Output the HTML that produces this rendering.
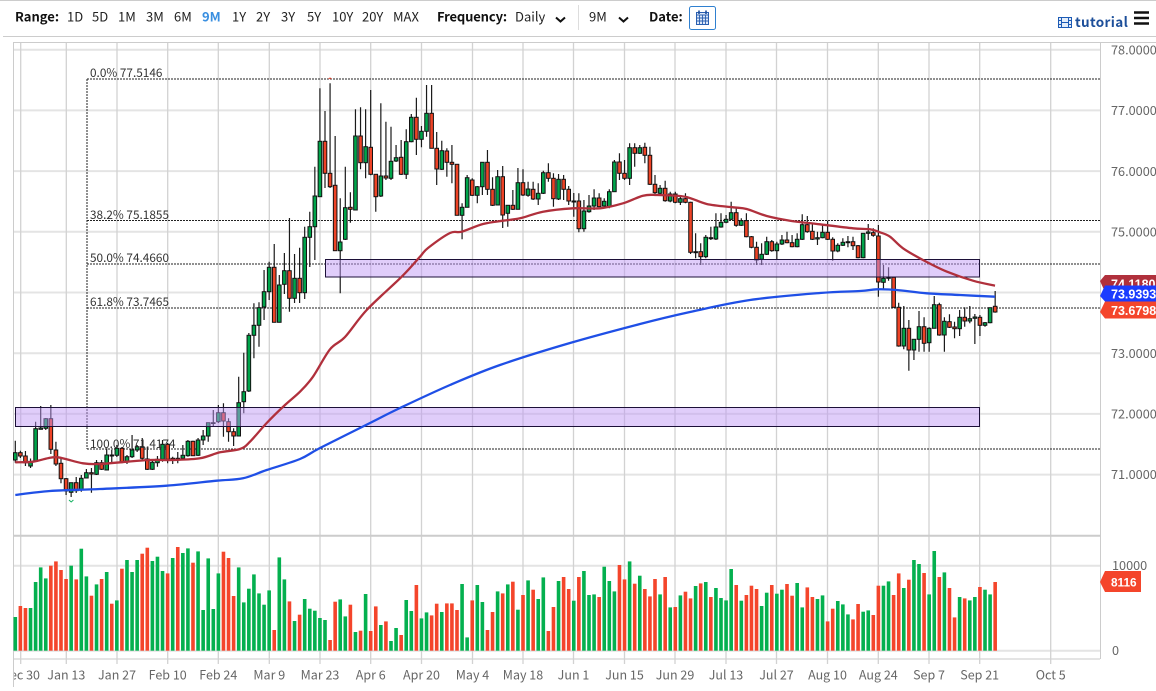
<!DOCTYPE html>
<html><head><meta charset="utf-8"><style>
html,body{margin:0;padding:0;background:#fff;width:1156px;height:691px;overflow:hidden}
svg{display:block;position:absolute;left:0;top:0}
text{font-family:"Noto Sans CJK SC","Liberation Sans",sans-serif}
.h{font-size:13px;fill:#222}
.hb{font-size:13px;font-weight:700;fill:#111}
.y{font-size:12.7px;fill:#666}
.x{font-size:12.5px;fill:#666;text-anchor:middle}
.f{font-size:11.8px;fill:#333}
.t{font-size:12.5px;font-weight:700;fill:#fff;font-family:"Liberation Sans",sans-serif}
</style></head><body>
<svg width="1156" height="691" viewBox="0 0 1156 691" xmlns="http://www.w3.org/2000/svg">
<defs><clipPath id="xc"><rect x="14" y="660" width="1100" height="30"/></clipPath></defs>
<rect x="0" y="0" width="1156" height="1" fill="#ccc"/>
<rect x="3" y="36" width="1153" height="1" fill="#ccc"/>
<rect x="578" y="5" width="1" height="25" fill="#ddd"/>
<text class="hb" x="15" y="21.5">Range:</text>
<g class="h">
<text class="h" x="67" y="21.5">1D</text><text class="h" x="92" y="21.5">5D</text><text class="h" x="118" y="21.5">1M</text><text class="h" x="146" y="21.5">3M</text><text class="h" x="174" y="21.5">6M</text>
<text x="202" y="21.5" style="font-size:13px;font-weight:700;fill:#3a8fe0">9M</text>
<text class="h" x="232" y="21.5">1Y</text><text class="h" x="256" y="21.5">2Y</text><text class="h" x="281" y="21.5">3Y</text><text class="h" x="307" y="21.5">5Y</text><text class="h" x="332" y="21.5">10Y</text><text class="h" x="362" y="21.5">20Y</text><text class="h" x="393" y="21.5">MAX</text>
</g>
<text class="hb" x="437" y="21.5" style="letter-spacing:-.15px">Frequency:</text>
<text class="h" x="515" y="21.5">Daily</text>
<path d="M556 17.5l4.5 4 4.5-4" fill="none" stroke="#111" stroke-width="2"/>
<text class="h" x="589" y="21.5">9M</text>
<path d="M619 17.5l4.5 4 4.5-4" fill="none" stroke="#111" stroke-width="2"/>
<text class="hb" x="649" y="21.5">Date:</text>
<rect x="689.5" y="6.5" width="26" height="23" rx="2" fill="#fff" stroke="#2f80d0"/>
<rect x="696.5" y="12.5" width="12" height="12" fill="#dfe9f8" stroke="#2a5fb0"/>
<path d="M696.5 15h12M699.5 15v9M702.5 15v9M705.5 15v9M697 18h11M697 21h11" stroke="#2a5fb0" stroke-width=".9" fill="none"/>
<path d="M699 10.5v3.5M706 10.5v3.5" stroke="#1f4f9c" stroke-width="1.6"/>
<rect x="1058.5" y="17.5" width="13" height="10" fill="#e4edf9" stroke="#1d5bb5"/>
<path d="M1061.5 17.5v10M1068.5 17.5v10M1058.5 20.5h3M1058.5 24.5h3M1068.5 20.5h3M1068.5 24.5h3M1061.5 22.5h7" stroke="#1d5bb5" stroke-width="1" fill="none"/>
<text x="1075" y="27" style="font-size:13.5px;font-weight:700;fill:#1d4f9a;letter-spacing:.35px">tutorial</text>
<path d="M1134 12.5h15M1134 18h15M1134 23.5h15" stroke="#111" stroke-width="2.6"/>

<g id="grid"></g>
<g id="vol"></g>
<g id="fib" fill="none" stroke="#222" stroke-width="1" stroke-dasharray="2 1">
<path d="M87 79H1100M87 220.5H1100M87 264H1100M87 308H1100M87 449H1100M87 79V449"/>
</g>
<g id="can"></g>
<rect x="15.5" y="407.5" width="964" height="19" fill="rgba(190,150,245,.48)" stroke="#1c1038" stroke-width="1"/>
<rect x="325.5" y="259.5" width="654" height="17.5" fill="rgba(190,150,245,.48)" stroke="#1c1038" stroke-width="1"/>
<path id="ma1" fill="none" stroke="#b0303c" stroke-width="2.3" stroke-linejoin="round"/>
<path id="ma2" fill="none" stroke="#1f4fe6" stroke-width="2.3" stroke-linejoin="round"/>
<path d="M69 500l2.2 2 2.2-2" fill="none" stroke="#12b060" stroke-width="1"/>
<path d="M328.5 79l1.5-1 1.5 1" fill="none" stroke="#e0402a" stroke-width="1"/>

<text class="f" x="90" y="77">0.0% 77.5146</text>
<text class="f" x="90" y="219">38.2% 75.1855</text>
<text class="f" x="90" y="262">50.0% 74.4660</text>
<text class="f" x="90" y="306">61.8% 73.7465</text>
<text class="f" x="90" y="448">100.0% 71.4174</text>

<text class="y" x="1111" y="54.5">78.0000</text>
<text class="y" x="1111" y="115">77.0000</text>
<text class="y" x="1111" y="176">76.0000</text>
<text class="y" x="1111" y="236.5">75.0000</text>
<text class="y" x="1111" y="358">73.0000</text>
<text class="y" x="1111" y="418.5">72.0000</text>
<text class="y" x="1111" y="479">71.0000</text>
<text class="y" x="1112" y="570">10000</text>
<text class="y" x="1112" y="655">0</text>

<path d="M1100 281l5-6h51v17h-51z" fill="#b0303c"/>
<text class="t" x="1111" y="288.500">74.1180</text>
<path d="M1100 296l5-10.500h51v16h-51z" fill="#1a3cff"/>
<text class="t" x="1111" y="298.500">73.9393</text>
<path d="M1100 312l5-10.500h51v17h-51z" fill="#f4452b"/>
<text class="t" x="1111" y="315">73.6798</text>
<path d="M1100 582l5-11h36v21h-36z" fill="#f4452b"/>
<text class="t" x="1111" y="586.300" style="font-size:11.800px">8116</text>

<g clip-path="url(#xc)">
<text class="x" x="20.700" y="679.500">Dec 30</text>
<text class="x" x="66.300" y="679.500">Jan 13</text>
<text class="x" x="117" y="679.500">Jan 27</text>
<text class="x" x="167.700" y="679.500">Feb 10</text>
<text class="x" x="218.300" y="679.500">Feb 24</text>
<text class="x" x="269.300" y="679.500">Mar 9</text>
<text class="x" x="320" y="679.500">Mar 23</text>
<text class="x" x="370.700" y="679.500">Apr 6</text>
<text class="x" x="421.500" y="679.500">Apr 20</text>
<text class="x" x="472.500" y="679.500">May 4</text>
<text class="x" x="523" y="679.500">May 18</text>
<text class="x" x="573.500" y="679.500">Jun 1</text>
<text class="x" x="624.500" y="679.500">Jun 15</text>
<text class="x" x="675" y="679.500">Jun 29</text>
<text class="x" x="726" y="679.500">Jul 13</text>
<text class="x" x="776.500" y="679.500">Jul 27</text>
<text class="x" x="827.500" y="679.500">Aug 10</text>
<text class="x" x="878.300" y="679.500">Aug 24</text>
<text class="x" x="929" y="679.500">Sep 7</text>
<text class="x" x="979.700" y="679.500">Sep 21</text>
<text class="x" x="1050.700" y="679.500">Oct 5</text>
</g>
</svg>
<script>
var X=function(i){return 15.3+5.077*i};
var vx=[20.7,66.3,117,167.7,218.3,269.3,320,370.7,421.5,472.5,523,573.5,624.5,675,726,776.5,827.5,878.3,929,979.7,1050.7];
var hy=[49.7,110.4,171.1,231.8,292.5,353.2,413.9,474.6];
var g='';
hy.forEach(function(y){g+='<path d="M14 '+y+'H1100" stroke="#e4e4e4" stroke-width="2"/>'});
[565.7,650.7,659].forEach(function(y){g+='<path d="M14 '+y+'H1100" stroke="#e4e4e4" stroke-width="2"/>'});
vx.forEach(function(x){g+='<path d="M'+x+' 42.500V535M'+x+' 536V664" stroke="#d2d2d2" stroke-width="1.300"/>'});
g+='<path d="M13 42.500H1156" stroke="#ccc" stroke-width="1"/><path d="M13 535.800H1100" stroke="#ccc" stroke-width="2"/>';
g+='<path d="M13.500 42V687" stroke="#ccc" stroke-width="1"/><path d="M1100.500 42V659" stroke="#ccc" stroke-width="1"/>';
document.getElementById('grid').innerHTML=g;

var vt=[261,228,234,234,156,112,145,107,94,120,147,107,148,56,139,197,163,147,126,221,211,116,90,126,90,71,53,93,80,123,130,84,51,69,55,98,64,240,85,237,130,65,84,198,112,217,176,133,190,224,181,300,82,148,214,273,254,207,236,242,264,270,330,215,208,259,224,306,302,192,303,229,285,274,333,294,315,210,243,165,265,247,256,221,246,220,220,240,162,322,211,165,216,300,246,184,190,163,155,239,195,151,179,207,142,303,231,153,141,177,212,141,123,195,193,201,110,153,184,105,148,94,161,137,177,199,147,193,141,232,231,196,185,205,168,160,156,201,174,204,211,117,165,212,195,167,177,228,188,165,191,179,162,197,159,232,172,201,207,196,274,236,213,223,253,268,222,245,241,255,167,167,154,195,130,174,149,90,102,129,193,63,141,127,174,262,201,205,211,201,171,179,193,156];
var red={1:1,2:1,7:1,8:1,9:1,10:1,12:1,15:1,17:1,19:1,21:1,25:1,26:1,30:1,32:1,35:1,41:1,42:1,43:1,51:1,54:1,56:1,62:1,63:1,66:1,68:1,70:1,71:1,73:1,76:1,79:1,82:1,83:1,85:1,86:1,87:1,90:1,93:1,94:1,96:1,98:1,100:1,102:1,105:1,106:1,108:1,109:1,111:1,115:1,119:1,120:1,122:1,124:1,125:1,126:1,128:1,130:1,132:1,133:1,135:1,137:1,142:1,144:1,145:1,146:1,149:1,152:1,153:1,156:1,157:1,160:1,161:1,165:1,166:1,169:1,170:1,173:1,174:1,176:1,179:1,182:1,184:1,185:1,187:1,190:1,193:1};
var v='';
vt.forEach(function(t,i){var h=(362-t)/3,y=650.7-h;v+='<rect x="'+(X(i)-1.8).toFixed(2)+'" y="'+y.toFixed(1)+'" width="3.600" height="'+h.toFixed(1)+'" fill="'+(red[i]?'#f4452b':'#04b04f')+'"/>'});
document.getElementById('vol').innerHTML=v;

var c="440.7 452.7 460 462.7 1|450.7 452.7 456 458 0|451 456 462.7 466 0|458.5 461.5 466 468 1|421.7 428.7 461.3 462 1|406 428 429.3 429.3 1|418 418.7 428.3 430 1|405 418.7 449.3 454 0|441.7 450 464 466 0|458 463.3 478.7 483.3 0|478 478.7 491 495 0|482.7 482.7 492.3 497 1|477 482.7 490.7 493 0|475 478.3 490 491.7 1|469 472.7 478 478.5 1|468 472.7 474 492.7 0|460 462.7 474.3 475 1|460 462.7 469.300 470 0|448.3 455 470 470 1|450 455 456 462 1|445 448.3 455.3 457 1|447 448.3 461.7 463.3 0|455 456.7 461.7 464 1|435 450 456.7 458 1|445 446.7 450 452 1|438 446.7 458.3 460 0|446.7 459 469.3 470 0|459 462.3 469.3 470 1|456 459.3 462.7 466.7 1|440 444.3 459.3 461.7 1|443 444.3 459.3 463.3 0|456.7 458.3 460.3 464 0|452 458.3 459.3 463.3 1|445 455.3 458.3 459.3 1|440 441.3 455.7 456.7 1|440.7 441.3 455.7 456 0|438 440 455.3 456 1|430 436 440 445 1|422.7 422.7 436 441.7 1|410 422.7 423.3 426.7 1|405 412.7 421.7 423 1|403.3 412.7 421 436.7 0|418.3 421.7 431.7 441.7 0|428.3 431.7 436 446 0|376.7 402.7 436 436 1|352.7 391.7 401.7 413.3 1|333 335.3 391 392 1|303.3 325.3 335.3 358.3 1|302.3 307.7 325.3 346.7 1|270 291.7 307 320 1|261.7 267.3 291.7 300 1|244 267.3 322.3 322.3 0|275 285 322.3 322.3 1|253 270.7 284.3 294 1|218 270.7 298.3 311.7 0|254 278.3 298.3 303 1|247.7 278.3 292.7 303 0|226.7 237.3 292.7 299 1|211.7 226.7 237.3 267 1|166.7 196 226.7 260 1|88.3 141.3 196.7 197 1|111 141.3 173.3 188 0|83.3 173.3 186.7 188 0|136 185.3 250.7 251 0|198.3 242 250.7 293.3 1|166.7 207.7 239.3 240 1|192.3 207.3 209.3 222.7 0|109.3 136 210 210 1|107.3 136 162.7 169.3 0|109.3 146.7 162.7 178.3 1|90 147.3 174.3 175.3 0|174 174.3 196.7 211.7 0|103.3 176 196 197 1|121.7 176 178 180 0|126.7 161.3 178.3 180 1|145 157.7 161 162 1|140 157.3 174.3 175 0|129.3 141.7 174.3 179 1|114 117.3 141.7 142.3 1|97.7 117.3 139.3 155 0|126 131.3 139.3 147.3 1|85 113.3 131.3 136.7 1|85 113.3 148.3 148.3 0|132 148.3 169 185 0|140.7 150.7 169.3 170 1|148.3 151 162.3 176.7 0|145 162.3 164.3 183.3 0|164 164.3 215.3 215.3 0|203.3 207.3 215.3 239.3 1|175 177.7 207.3 207.3 1|178.3 180 195.3 196 0|186 186.7 195.3 203.3 1|162 162.3 186.7 195 1|150 162.3 189.3 195 0|177.3 189.3 205.3 206 0|170 176.7 205 205 1|166 176.7 215 228 0|205 205.3 213.3 226.7 1|190 205.3 209.3 210 0|168 182.7 209.3 209.3 1|169.3 182.7 195 196 0|181.7 189 195.3 196.7 1|181.7 189.3 199 200 0|183.3 193.3 199 205 1|170.7 172.7 193.3 194 1|163.3 172.7 178.3 181.7 0|173.3 178.3 198.7 206.7 0|174 179.3 199 200 1|175 179.3 189.3 200 0|186 189.3 201 205 0|193 201 202 216.7 0|193.3 201 228.7 232.3 0|200 211 228.7 231.7 1|195 206 211.7 212.7 1|189.3 198 206 210 1|193.3 198 206.7 207.3 0|198.3 201.3 206 206.7 1|189.3 191.7 206.7 208.3 1|160 162 191.7 191.7 1|153.3 162 173.3 180 0|160 173.3 178.3 180 0|143.3 147.7 178.3 185 1|143.3 147.7 153.3 166.7 0|145 147.7 153.3 154 1|142.7 147.3 155.3 163.3 0|146.7 155.3 184.3 185 0|175 184.3 192.7 195 0|185 188.3 193.3 194 1|180.7 188.3 200.7 201.7 0|191.7 194 201 202.3 1|191.7 194 202.3 203.3 0|195 198.7 202.3 205 1|193.3 198.7 202.3 203.3 0|201.7 202.3 252.3 254 0|233.3 251.7 252.7 258.3 1|243.3 251.7 256.7 265 0|235 237.3 256.7 258.3 1|226.7 237.7 238.7 240 0|213.3 227 239 240 1|213.3 222.3 227 227.7 1|215 219.3 222.3 223.3 1|201.7 212.7 219.3 220 1|206.7 212.7 225.3 226.7 0|218.3 220.7 225.3 226 1|213.3 220.7 236.7 237.3 0|236 236.7 247.3 248.3 0|241.7 247.3 260 265 0|243.3 254.3 259.3 265 1|236.7 241.7 254.3 255 1|240 241.7 250.7 251.7 0|241.7 244 250.7 260 1|235 240 244 245 1|231.7 240 242.7 243.3 0|235 242.7 246.7 247.3 0|233.3 239.3 246.7 247.3 1|214.3 224.7 239.3 240 1|216 224.7 231.7 232.7 0|223.3 231.3 239.3 240 0|231.7 237.7 239 245 1|225 232.3 237.7 238.3 1|220.7 232.3 239.3 240 0|237.3 239.3 251 260.7 0|243.3 245.3 251 252.3 1|238.3 242.3 245.3 246 1|236 241.7 242.7 247.3 1|236.7 241.7 245.7 250 0|245 245.7 257.7 258.3 0|233 233.3 257.7 258.3 1|224 232 233.3 240 1|228.3 232.7 235.3 236.7 0|225 236 282 296.7 0|265 278.3 282.3 290 1|267.3 277.3 278.3 280.7 1|276.7 277.3 307.3 307.3 0|302.7 307.3 346 346.7 0|306 328.3 346 349.3 1|320 328.3 350 370.7 0|339 339.3 350 360 1|311 326.7 339.3 351.7 1|317.3 326.7 343.3 351.7 0|327.3 328.3 342.7 351.7 1|296 304.7 328.3 328.3 1|302.7 304.7 335 335.7 0|317.3 321.3 335 351.7 1|314.3 321.7 327.3 328 0|321.7 327 328.7 338.3 0|310 317.3 328.7 336 1|307.3 317.3 321 326.7 0|306 318.7 321 323.3 1|314 317 318.3 344 1|315 317.3 325.3 336 0|322 322.7 325.3 326.7 1|307.7 307.7 322.7 323.3 1|291 306.3 312 312.7 0";
var w='',b='';
c.split('|').forEach(function(r,i){var a=r.split(' ').map(Number),x=X(i).toFixed(2);
w+='M'+x+' '+a[0]+'V'+a[3];
b+='<rect x="'+(X(i)-1.8).toFixed(2)+'" y="'+a[1]+'" width="3.600" height="'+Math.max(a[2]-a[1],.8).toFixed(1)+'" fill="'+(a[4]?'#00a44a':'#ee4326')+'" stroke="#111" stroke-width="1"/>'});
document.getElementById('can').innerHTML='<path d="'+w+'" stroke="#1a1a1a" stroke-width="1.200" fill="none"/>'+b;

function sm(s){var p=s.trim().split(' ').map(function(q){return q.split(',').map(Number)});var d='M'+p[0];
for(var i=0;i<p.length-1;i++){var a=p[Math.max(i-1,0)],b=p[i],e=p[i+1],f=p[Math.min(i+2,p.length-1)];
d+='C'+(b[0]+(e[0]-a[0])/6).toFixed(1)+' '+(b[1]+(e[1]-a[1])/6).toFixed(1)+' '+(e[0]-(f[0]-b[0])/6).toFixed(1)+' '+(e[1]-(f[1]-b[1])/6).toFixed(1)+' '+e[0]+' '+e[1]}
return d}
document.getElementById('ma1').setAttribute('d',sm("15.3,462.3 33,461.7 50,457.7 58,457.300 66.7,459.3 83,463.3 100,464 126.7,461.7 150,460 173,460 200,458.3 220,452.3 240,449 250,441.700 266.7,423 285,405 300,391.700 313,376.700 330,349.300 345,337 366.700,310 401.700,276.700 420,256.700 428,248 450,233 461.700,231.700 483,224 503,220.700 520,218.300 543,211.700 573,208.300 600,208.300 623,203.300 643,195.700 657,195 685,196.700 706.700,204 733,207.300 746.700,209 766.700,216 790,220.700 820,224.300 853,228.300 870,229.300 880,232.300 890,236.700 903,248.300 923,260 947,271.700 973,280.700 995,285.700"));
document.getElementById('ma2').setAttribute('d',sm("15.3,495 50,491 100,489 166.700,485.700 216.700,480.700 243,478.300 266.700,470 300,459 320,448 370,423 400,408 450,385 500,365 570,343 640,324 690,312 750,300 820,293 860,291 876.700,289.300 896.700,290 926.700,293.300 960,295 995,296.700"));
</script>
</body></html>
